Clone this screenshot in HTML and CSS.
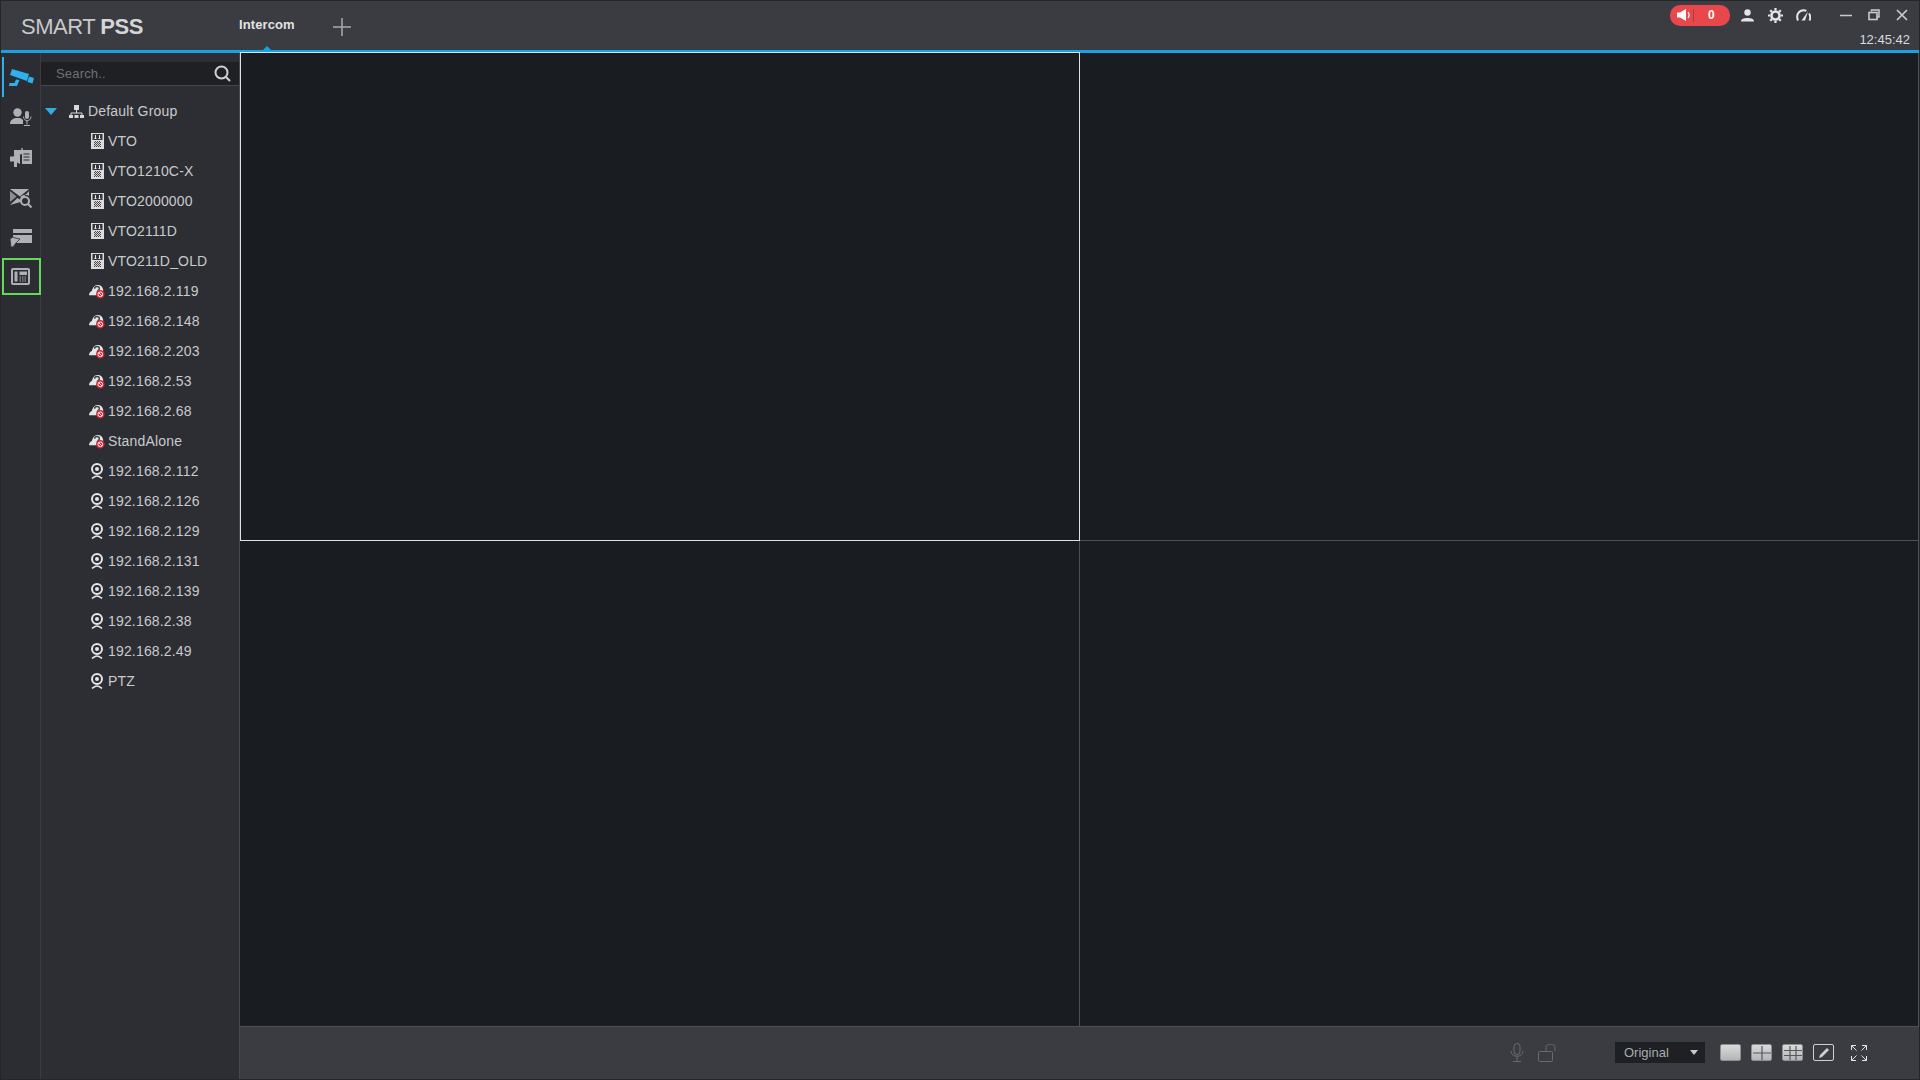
FILE: index.html
```html
<!DOCTYPE html>
<html lang="en">
<head>
    <meta charset="UTF-8">
    <title>SMART PSS</title>
    <link rel="stylesheet" href="styles.css">
</head>
<body>
    <svg class="defs" width="0" height="0">
        <defs>
            <pattern id="dither" width="2" height="2" patternUnits="userSpaceOnUse">
                <rect width="2" height="2" fill="#d8d8d8"/>
                <rect width="1" height="1" fill="#45474a"/>
                <rect x="1" y="1" width="1" height="1" fill="#45474a"/>
            </pattern>
        </defs>
        <symbol id="i-vto" viewBox="0 0 13 16">
            <rect width="13" height="16" fill="#dcdcdc"/>
            <rect x="1.500" y="1" width="10" height="6" fill="#34363a"/>
            <path d="M4.500 2v4M8.500 2v4M3.500 5.500h2M7.500 5.500h2" stroke="#e8e8e8" stroke-width="1"/>
            <rect x="3" y="8" width="7" height="6" fill="url(#dither)"/>
        </symbol>
        <symbol id="i-offline" viewBox="0 0 17 15">
            <path d="M0 11.500C0 9 1.500 7.500 3 7 4 2.500 6.500.5 9.500.5c3 0 5 2 5.500 5v6z" fill="#e6e6e6"/>
            <path d="M6 4.500C6 1.500 11 1.500 11 4.500c0 1.500-2 1.500-2 3.500" fill="none" stroke="#3d3f43" stroke-width="1.500"/>
            <circle cx="12" cy="10.500" r="4.500" fill="#d3222f"/>
            <circle cx="12" cy="10.500" r="2.500" fill="none" stroke="#fff" stroke-width="1"/>
            <path d="M10.300 8.800l3.400 3.400" stroke="#fff" stroke-width="1"/>
        </symbol>
        <symbol id="i-ipc" viewBox="0 0 14 17">
            <circle cx="7" cy="6" r="5" fill="none" stroke="#e6e6e6" stroke-width="2"/>
            <circle cx="7" cy="6" r="2" fill="#e6e6e6"/>
            <path d="M2 15.500c2-1.500 3-2.500 5-2.500s3 1 5 2.500" fill="none" stroke="#e6e6e6" stroke-width="1.600"/>
        </symbol>
    </svg>

    <div class="window">
        <header class="topbar">
            <div class="logo">SMART <b>PSS</b></div>
            <div class="tab">Intercom</div>
            <svg class="add-tab" width="18" height="18" viewBox="0 0 18 18"><path d="M9 0v18M0 9h18" stroke="#a9abae" stroke-width="1.500"/></svg>
            <div class="top-right">
                <div class="top-icons">
                    <div class="alarm">
                        <svg width="16" height="14" viewBox="0 0 16 14"><path d="M0 4.500h3L9 1v12L3 9.500H0z" fill="#fff"/><path d="M11 4c1.200 1.600 1.200 4.400 0 6" fill="none" stroke="#fff" stroke-width="1.200"/></svg>
                        <span class="alarm-sep"></span>
                        <span class="alarm-count">0</span>
                    </div>
                    <svg class="top-icon user-icon" width="13" height="13" viewBox="0 0 13 13"><circle cx="6.500" cy="3.500" r="3.200" fill="#e4e4e4"/><path d="M0 12.500c0-3 3.500-3.500 6.500-3.500s6.500.5 6.500 3.500z" fill="#e4e4e4"/></svg>
                    <svg class="top-icon gear-icon" width="15" height="15" viewBox="0 0 15 15"><circle cx="7.500" cy="7.500" r="4" fill="none" stroke="#e4e4e4" stroke-width="2.600"/><path d="M7.500 0v15M0 7.500h15M2.200 2.200l10.600 10.600M12.800 2.200L2.200 12.800" stroke="#e4e4e4" stroke-width="2.200" stroke-dasharray="2.400 10.200"/></svg>
                    <svg class="top-icon gauge-icon" width="15" height="12" viewBox="0 0 15 12"><path d="M2 11.500C-.5 6 3 1.200 7.500 1.200c1 0 2 .2 2.800.7M13 4.500c1.500 2 1.600 4.500.5 7" fill="none" stroke="#e4e4e4" stroke-width="2"/><path d="M5.500 11.500L12 2.500 9 11.500z" fill="#e4e4e4"/></svg>
                    <div class="win-btns">
                        <svg width="12" height="12" viewBox="0 0 12 12"><path d="M0 6.500h12" stroke="#c9cacc" stroke-width="1.500"/></svg>
                        <svg width="12" height="12" viewBox="0 0 12 12"><path d="M3.500 2.500V1h7.500v7H9" fill="none" stroke="#c9cacc" stroke-width="1.500"/><rect x="1" y="3.500" width="8" height="7" fill="none" stroke="#c9cacc" stroke-width="1.600"/></svg>
                        <svg width="12" height="12" viewBox="0 0 12 12"><path d="M1 1l10 10M11 1L1 11" stroke="#c9cacc" stroke-width="1.700"/></svg>
                    </div>
                </div>
                <div class="clock">12:45:42</div>
            </div>
        </header>

        <div class="content">
            <nav class="rail">
                <div class="rail-item active">
                    <svg class="cam" width="26" height="18" viewBox="0 0 26 18"><path d="M3 0l17 5-2 7L1 6z" fill="#2fb0ee"/><path d="M20 7.500l5 1.500-1.500 5.500-5-1.500z" fill="#2fb0ee"/><path d="M7 10.500L5.500 14h-5L0 17h8l2.500-6z" fill="#2fb0ee"/></svg>
                </div>
                <div class="rail-item">
                    <svg class="person" width="22" height="18" viewBox="0 0 22 18"><circle cx="7.500" cy="4.500" r="4.200" fill="#aeb0b4"/><path d="M0 16c0-4 3-5 5-6h5c1 .5 2 1 3 2v4z" fill="#aeb0b4"/><rect x="15" y="3" width="4" height="8" rx="2" fill="#aeb0b4"/><path d="M13.500 8.500c0 5.500 7.500 5.500 7.500 0M17 13v3.500M14 17.500h6" fill="none" stroke="#aeb0b4" stroke-width="1"/></svg>
                </div>
                <div class="rail-item">
                    <svg width="22" height="20" viewBox="0 0 22 20"><rect x="11" y="0" width="2" height="2" fill="#8c8e92"/><path d="M4 2h18v14H12V6L4 8z" fill="#aeb0b4"/><path d="M0 8.500h3l7-3.500v11l-3-1.500V19H4v-5.500H0z" fill="#aeb0b4"/><path d="M13.500 6h6M13.500 9h6M13.500 12h6" stroke="#2b2d32" stroke-width="1.200"/></svg>
                </div>
                <div class="rail-item">
                    <svg width="22" height="20" viewBox="0 0 22 20"><path d="M0 1h19l-9 7.500z" fill="#aeb0b4"/><path d="M0 3l6.500 5.500L0 14z" fill="#8c8e92"/><path d="M19 3v5a6 6 0 0 0-8 .5 6 6 0 0 0-.5 5.500L0 17l7.500-7 3 2 3-3z" fill="#aeb0b4"/><circle cx="15" cy="13" r="4" fill="none" stroke="#aeb0b4" stroke-width="2"/><path d="M18 16l3.500 3.500" stroke="#aeb0b4" stroke-width="2"/></svg>
                </div>
                <div class="rail-item">
                    <svg width="22" height="18" viewBox="0 0 22 18"><rect x="3" y="0" width="19" height="4" fill="#aeb0b4"/><rect x="3" y="6" width="19" height="8" fill="#aeb0b4"/><path d="M0 10l3-2 2 1 5 1-2 2-2 2-3 4H1z" fill="#aeb0b4" stroke="#2b2d32" stroke-width=".8"/></svg>
                </div>
                <div class="rail-item selected">
                    <svg width="19" height="17" viewBox="0 0 19 17"><rect x="1" y="1" width="17" height="15" rx="1" fill="none" stroke="#aeb0b4" stroke-width="2"/><rect x="3.500" y="3.500" width="3" height="10" fill="#aeb0b4"/><rect x="8.500" y="3.500" width="7.500" height="3.500" fill="#aeb0b4"/><path d="M8.500 9h7.500M8.500 11h7.500M8.500 13h7.500" stroke="#aeb0b4" stroke-dasharray="1.500 1"/></svg>
                </div>
            </nav>

            <aside class="tree-panel">
                <div class="search">
                    <span class="search-text">Search..</span>
                    <svg width="17" height="17" viewBox="0 0 17 17"><circle cx="7.500" cy="7.500" r="6" fill="none" stroke="#d0d0d0" stroke-width="2"/><path d="M12 12l4 4" stroke="#d0d0d0" stroke-width="2"/></svg>
                </div>
                <ul class="tree">
                    <li class="tree-group">
                        <span class="arrow"></span>
                        <svg class="group-icon" width="15" height="13" viewBox="0 0 15 13"><rect x="5" y="0" width="5" height="5" fill="#d8d8d8"/><path d="M7.500 5v3M2 11V8h11v3" fill="none" stroke="#d8d8d8"/><rect x="0" y="10" width="4" height="3" fill="#d8d8d8"/><rect x="5.500" y="10" width="4" height="3" fill="#d8d8d8"/><rect x="11" y="10" width="4" height="3" fill="#d8d8d8"/></svg>
                        Default Group
                    </li>
                    <li class="tree-item"><span class="ico"><svg width="13" height="16"><use href="#i-vto"/></svg></span>VTO</li>
                    <li class="tree-item"><span class="ico"><svg width="13" height="16"><use href="#i-vto"/></svg></span>VTO1210C-X</li>
                    <li class="tree-item"><span class="ico"><svg width="13" height="16"><use href="#i-vto"/></svg></span>VTO2000000</li>
                    <li class="tree-item"><span class="ico"><svg width="13" height="16"><use href="#i-vto"/></svg></span>VTO2111D</li>
                    <li class="tree-item"><span class="ico"><svg width="13" height="16"><use href="#i-vto"/></svg></span>VTO211D_OLD</li>
                    <li class="tree-item"><span class="ico"><svg width="17" height="15"><use href="#i-offline"/></svg></span>192.168.2.119</li>
                    <li class="tree-item"><span class="ico"><svg width="17" height="15"><use href="#i-offline"/></svg></span>192.168.2.148</li>
                    <li class="tree-item"><span class="ico"><svg width="17" height="15"><use href="#i-offline"/></svg></span>192.168.2.203</li>
                    <li class="tree-item"><span class="ico"><svg width="17" height="15"><use href="#i-offline"/></svg></span>192.168.2.53</li>
                    <li class="tree-item"><span class="ico"><svg width="17" height="15"><use href="#i-offline"/></svg></span>192.168.2.68</li>
                    <li class="tree-item"><span class="ico"><svg width="17" height="15"><use href="#i-offline"/></svg></span>StandAlone</li>
                    <li class="tree-item"><span class="ico"><svg width="14" height="17"><use href="#i-ipc"/></svg></span>192.168.2.112</li>
                    <li class="tree-item"><span class="ico"><svg width="14" height="17"><use href="#i-ipc"/></svg></span>192.168.2.126</li>
                    <li class="tree-item"><span class="ico"><svg width="14" height="17"><use href="#i-ipc"/></svg></span>192.168.2.129</li>
                    <li class="tree-item"><span class="ico"><svg width="14" height="17"><use href="#i-ipc"/></svg></span>192.168.2.131</li>
                    <li class="tree-item"><span class="ico"><svg width="14" height="17"><use href="#i-ipc"/></svg></span>192.168.2.139</li>
                    <li class="tree-item"><span class="ico"><svg width="14" height="17"><use href="#i-ipc"/></svg></span>192.168.2.38</li>
                    <li class="tree-item"><span class="ico"><svg width="14" height="17"><use href="#i-ipc"/></svg></span>192.168.2.49</li>
                    <li class="tree-item"><span class="ico"><svg width="14" height="17"><use href="#i-ipc"/></svg></span>PTZ</li>
                </ul>
            </aside>

            <main class="stage">
                <div class="video-grid">
                    <div class="cell current"></div>
                    <div class="cell"></div>
                    <div class="cell"></div>
                    <div class="cell"></div>
                </div>
                <div class="toolbar">
                    <svg class="tool-dim" width="14" height="19" viewBox="0 0 14 19"><rect x="4" y="0.500" width="6" height="11" rx="3" fill="none" stroke="#676a6e"/><path d="M1 8c0 7 12 7 12 0M7 13.500v4.500M3 18.500h8" fill="none" stroke="#676a6e"/></svg>
                    <svg class="tool-dim lock" width="18" height="18" viewBox="0 0 18 18"><rect x="0.500" y="7.500" width="14" height="10" rx="1" fill="none" stroke="#676a6e"/><path d="M8 7V3.500a4 3 0 0 1 9 0V7" fill="none" stroke="#676a6e"/></svg>
                    <div class="ratio-select"><span>Original</span><i class="caret"></i></div>
                    <div class="split-btn"></div>
                    <div class="split-btn">
                        <svg width="18" height="14" viewBox="0 0 18 14"><path d="M0 7h18M9 0v14" stroke="#55585c" stroke-width="1.200"/></svg>
                    </div>
                    <div class="split-btn">
                        <svg width="18" height="14" viewBox="0 0 18 14"><path d="M0 4.500h18M0 9.500h18M6 0v14M12 0v14" stroke="#55585c" stroke-width="1.200"/></svg>
                    </div>
                    <div class="split-btn pen">
                        <svg width="14" height="12" viewBox="0 0 14 12"><path d="M2 11l1-3 7-7 2 2-7 7z" fill="#cfd0d2"/></svg>
                    </div>
                    <svg class="fullscreen" width="16" height="16" viewBox="0 0 16 16"><path d="M.5 5V.5H5M.5.5l5 5M15.500 5V.5H11M15.500.5l-5 5M.5 11v4.500H5M.5 15.500l5-5M15.500 11v4.500H11M15.500 15.500l-5-5" fill="none" stroke="#e4e4e4"/></svg>
                </div>
            </main>
        </div>
    </div>
</body>
</html>
```

FILE: styles.css
```css
html, body {
    margin: 0;
    height: 100%;
    background-color: #1c1e22;
    overflow: hidden;
}

body {
    font-family: "Liberation Sans", Arial, sans-serif;
    color: #cfd0d2;
}

.defs {
    display: block;
    height: 0;
}

.window {
    width: 1920px;
    height: 1080px;
    display: flex;
    flex-direction: column;
    box-sizing: border-box;
    border: 1px solid #24262a;
}

/* barra superior */
.topbar {
    height: 52px;
    flex: none;
    box-sizing: border-box;
    display: flex;
    background-color: #3a3c41;
    border-bottom: 3px solid #16a3e6;
}

.logo {
    width: 238px;
    padding: 13px 0 0 20px;
    box-sizing: border-box;
    font-size: 22px;
    letter-spacing: -0.5px;
    color: #c8c9cb;
}

.logo b {
    color: #d4d5d6;
}

.tab {
    width: 57px;
    padding-top: 16px;
    font-size: 13px;
    font-weight: bold;
    letter-spacing: 0.1px;
    color: #e2e3e4;
    white-space: nowrap;
    position: relative;
}

.tab::after {
    content: "";
    position: absolute;
    left: 24px;
    bottom: 0;
    border: 4px solid transparent;
    border-top: 0;
    border-bottom-color: #16a3e6;
}

.add-tab {
    margin: 17px 0 0 37px;
}

.top-right {
    margin-left: auto;
    display: flex;
    flex-direction: column;
    align-items: flex-end;
    padding-right: 9px;
}

.top-icons {
    display: flex;
    align-items: center;
    height: 28px;
    padding-right: 2px;
}

.alarm {
    width: 60px;
    height: 21px;
    border-radius: 10px;
    background-color: #e8474c;
    display: flex;
    align-items: center;
    padding-left: 7px;
    box-sizing: border-box;
    color: #fff;
    font-size: 12px;
    font-weight: bold;
}

.alarm-sep {
    width: 1px;
    height: 13px;
    background-color: #b9353a;
}

.alarm-count {
    margin-left: 14px;
}

.top-icon {
    flex: none;
}

.user-icon {
    margin-left: 11px;
}

.gear-icon {
    margin-left: 14px;
}

.gauge-icon {
    margin-left: 13px;
}

.win-btns {
    display: flex;
    gap: 16px;
    margin-left: 29px;
    align-items: center;
}

.clock {
    font-size: 13px;
    color: #d9dadb;
    line-height: 15px;
    margin-top: 3px;
}

/* zona central */
.content {
    flex: 1;
    display: flex;
    min-height: 0;
}

.rail {
    width: 40px;
    flex: none;
    box-sizing: border-box;
    background-color: #2b2d32;
    border-right: 1px solid #3a3c41;
    padding-top: 5px;
    display: flex;
    flex-direction: column;
}

.rail-item {
    height: 40px;
    display: flex;
    align-items: center;
    justify-content: center;
    position: relative;
    flex: none;
}

.rail-item .cam {
    margin-left: 2px;
}

.rail-item .person {
    margin-bottom: 2px;
}

.rail-item.active::before {
    content: "";
    position: absolute;
    left: 1px;
    top: -1px;
    width: 2px;
    height: 40px;
    background-color: #2fb0ee;
}

.rail-item.selected {
    margin-left: 1px;
    width: 39px;
    height: 37px;
    box-sizing: border-box;
    border: 2px solid #63d85a;
    padding-right: 3px;
}

.tree-panel {
    width: 199px;
    flex: none;
    box-sizing: border-box;
    background-color: #2c2e33;
    border-right: 1px solid #46484c;
    font-size: 14px;
    letter-spacing: 0.17px;
}

.search {
    height: 23px;
    margin-top: 9px;
    display: flex;
    align-items: center;
    background-color: #1e2024;
    border-bottom: 1px solid #45474b;
    padding: 0 8px 0 15px;
}

.search-text {
    flex: 1;
    font-size: 13px;
    color: #6f7175;
}

.tree {
    list-style: none;
    margin: 10px 0 0;
    padding: 0;
}

.tree-group,
.tree-item {
    height: 30px;
    display: flex;
    align-items: center;
    color: #c9cacc;
    white-space: nowrap;
}

.tree-group {
    padding-left: 4px;
}

.arrow {
    border: 6px solid transparent;
    border-bottom: 0;
    border-top: 7px solid #35a9e2;
    margin-right: 12px;
}

.group-icon {
    margin-right: 4px;
}

.tree-item {
    padding-left: 48px;
}

.ico {
    width: 19px;
    flex: none;
    box-sizing: border-box;
    padding-right: 3px;
    display: flex;
    justify-content: center;
}

/* video */
.stage {
    flex: 1;
    display: flex;
    flex-direction: column;
    min-width: 0;
}

.video-grid {
    flex: 1;
    display: grid;
    grid-template-columns: 840px 1fr;
    grid-template-rows: 488px 1fr;
    background-color: #191d22;
    min-height: 0;
}

.cell {
    box-sizing: border-box;
    border-right: 1px solid #4e5054;
    border-bottom: 1px solid #4e5054;
    background-color: #191d22;
}

/* el marco de la ventana activa pisa la linea azul */
.cell.current {
    border: 1px solid #dfe0e1;
    margin-top: -1px;
}

.toolbar {
    height: 52px;
    flex: none;
    box-sizing: border-box;
    display: flex;
    align-items: center;
    background-color: #3a3c41;
    padding: 0 52px 1px 0;
    justify-content: flex-end;
}

.tool-dim {
    flex: none;
}

.lock {
    margin-left: 14px;
    margin-right: 59px;
}

.ratio-select {
    width: 90px;
    height: 21px;
    background-color: #1e2024;
    display: flex;
    align-items: center;
    justify-content: space-between;
    padding: 0 7px 0 9px;
    box-sizing: border-box;
    font-size: 13px;
    color: #a9abae;
    margin-right: 15px;
}

.caret {
    border: 4px solid transparent;
    border-bottom: 0;
    border-top: 5px solid #c9cacc;
}

.split-btn {
    width: 21px;
    height: 17px;
    box-sizing: border-box;
    margin-right: 10px;
    border: 1px solid #8d8f92;
    border-radius: 2px;
    background: linear-gradient(#dadada, #b4b5b6);
    display: flex;
    align-items: center;
    justify-content: center;
    overflow: hidden;
}

.split-btn.pen {
    background: #3a3c41;
    border-color: #cfd0d2;
}

.fullscreen {
    margin-left: 7px;
}
```
